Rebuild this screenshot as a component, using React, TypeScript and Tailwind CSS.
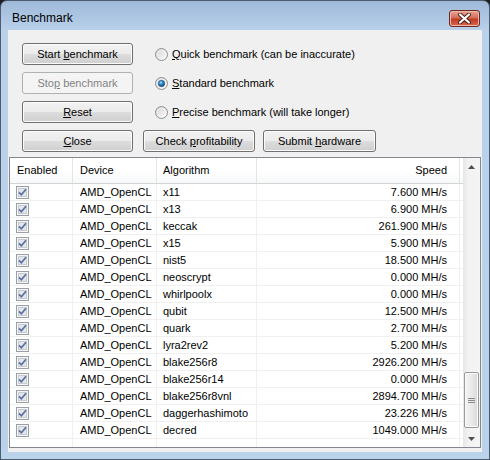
import React from "react";

type Row = { algo: string; speed: string };

const rows: Row[] = [
  { algo: "x11", speed: "7.600 MH/s" },
  { algo: "x13", speed: "6.900 MH/s" },
  { algo: "keccak", speed: "261.900 MH/s" },
  { algo: "x15", speed: "5.900 MH/s" },
  { algo: "nist5", speed: "18.500 MH/s" },
  { algo: "neoscrypt", speed: "0.000 MH/s" },
  { algo: "whirlpoolx", speed: "0.000 MH/s" },
  { algo: "qubit", speed: "12.500 MH/s" },
  { algo: "quark", speed: "2.700 MH/s" },
  { algo: "lyra2rev2", speed: "5.200 MH/s" },
  { algo: "blake256r8", speed: "2926.200 MH/s" },
  { algo: "blake256r14", speed: "0.000 MH/s" },
  { algo: "blake256r8vnl", speed: "2894.700 MH/s" },
  { algo: "daggerhashimoto", speed: "23.226 MH/s" },
  { algo: "decred", speed: "1049.000 MH/s" },
];

// win7 style push button
const Btn = ({ children, className, disabled }: { children: React.ReactNode; className: string; disabled?: boolean }) => (
  <div
    className={
      "h-[22px] flex items-center justify-center rounded-[3px] border " +
      (disabled
        ? "border-[#adb2b5] bg-[#f4f4f4] text-[#838383] "
        : "border-[#707070] bg-[linear-gradient(#f2f2f2,#ebebeb_50%,#dddddd_50%,#cfcfcf)] shadow-[inset_0_0_0_1px_#fbfbfb] text-black ") +
      className
    }
  >
    <span className="leading-none">{children}</span>
  </div>
);

const Radio = ({ checked, id }: { checked?: boolean; id: string }) => (
  <svg width="13" height="13" viewBox="0 0 13 13" className="shrink-0">
    <defs>
      <linearGradient id={"rg" + id} x1="0" y1="0" x2="1" y2="1">
        <stop offset="0" stopColor="#d4d4d4" />
        <stop offset="1" stopColor="#fbfbfb" />
      </linearGradient>
      <radialGradient id={"rd" + id} cx="0.4" cy="0.35" r="0.7">
        <stop offset="0" stopColor="#a8dcfb" />
        <stop offset="0.45" stopColor="#2b86c9" />
        <stop offset="1" stopColor="#0e3f6e" />
      </radialGradient>
    </defs>
    <circle cx="6.5" cy="6.5" r="6" fill={"url(#rg" + id + ")"} stroke="#8f9090" />
    <circle cx="6.5" cy="6.5" r="4.2" fill="none" stroke="#ffffff" strokeOpacity="0.5" />
    {checked && <circle cx="6.5" cy="6.5" r="3.2" fill={"url(#rd" + id + ")"} stroke="#1b4f7f" strokeWidth="0.6" />}
  </svg>
);

const Check = () => (
  <svg width="13" height="13" viewBox="0 0 13 13">
    <rect x="0.5" y="0.5" width="12" height="12" fill="#f5f6f7" stroke="#9a9fa5" />
    <rect x="2.5" y="2.5" width="8" height="8" fill="#e3e6ea" stroke="#c6cbd0" />
    <path d="M3 6.3 L5.4 8.8 L10 3.2" fill="none" stroke="#5a6ea3" strokeWidth="1.7" />
  </svg>
);

const App = () => {
  return (
    <div className="w-[490px] h-[460px] bg-[#1e1e1e] font-['Liberation_Sans',Arial,sans-serif] text-[11px] text-black">
      <div className="w-[490px] h-[460px] rounded-t-[7px] border border-[#4d5c6e] bg-[linear-gradient(#9eb9d8,#bad1eb_30px,#bbd2eb)] flex flex-col">
        {/* title bar */}
        <div className="h-[29px] flex items-start justify-between">
          <div className="pl-[11px] pt-[10px] text-[12px] leading-[14px] text-black">Benchmark</div>
          <div className="mt-[9px] mr-[9px] w-[31px] h-[17px] rounded-[3px] border border-[#6b2a21] bg-[linear-gradient(#eaa595,#d46e59_45%,#c13a24_55%,#d8684c)] shadow-[inset_0_0_0_1px_#f0b8aa] flex items-center justify-center">
            <svg width="13" height="11" viewBox="0 0 13 11">
              <path d="M2 1.5 L11 9.5 M11 1.5 L2 9.5" stroke="#4a1d16" strokeWidth="4" strokeLinecap="round" />
              <path d="M2 1.5 L11 9.5 M11 1.5 L2 9.5" stroke="#ffffff" strokeWidth="2.2" strokeLinecap="round" />
            </svg>
          </div>
        </div>

        {/* client area */}
        <div className="mx-[7px] h-[422px] bg-[#f0f0f0] flex flex-col">
          <div className="pl-[14px] pt-[13px] flex flex-col gap-[7px]">
            <div className="flex items-center">
              <Btn className="w-[111px]">Start <span className="underline">b</span>enchmark</Btn>
              <div className="ml-[22px] flex items-center gap-[4px]">
                <Radio id="a" />
                <span><span className="underline">Q</span>uick benchmark (can be inaccurate)</span>
              </div>
            </div>
            <div className="flex items-center">
              <Btn className="w-[111px]" disabled>Sto<span className="underline">p</span> benchmark</Btn>
              <div className="ml-[22px] flex items-center gap-[4px]">
                <Radio id="b" checked />
                <span><span className="underline">S</span>tandard benchmark</span>
              </div>
            </div>
            <div className="flex items-center">
              <Btn className="w-[111px]"><span className="underline">R</span>eset</Btn>
              <div className="ml-[22px] flex items-center gap-[4px]">
                <Radio id="c" />
                <span><span className="underline">P</span>recise benchmark (will take longer)</span>
              </div>
            </div>
            <div className="flex items-center">
              <Btn className="w-[111px]"><span className="underline">C</span>lose</Btn>
              <Btn className="w-[112px] ml-[10px]">Check <span className="underline">p</span>rofitability</Btn>
              <Btn className="w-[113px] ml-[8px]">Submit <span className="underline">h</span>ardware</Btn>
            </div>
          </div>

          {/* list view */}
          <div className="mt-[5px] ml-[1px] w-[472px] h-[291px] border border-[#828790] bg-white flex">
            <div className="w-[453px] flex flex-col">
              <div className="h-[26px] shrink-0 flex border-b border-[#d5d5d5] bg-[linear-gradient(#ffffff,#ffffff_50%,#f7f8f9)]">
                <div className="w-[63px] border-r border-[#e5e5e5] pl-[7px] flex items-center">Enabled</div>
                <div className="w-[84px] border-r border-[#e5e5e5] pl-[7px] flex items-center">Device</div>
                <div className="w-[100px] border-r border-[#e5e5e5] pl-[6px] flex items-center">Algorithm</div>
                <div className="w-[203px] border-r border-[#e5e5e5] pr-[12px] flex items-center justify-end">Speed</div>
              </div>
              {rows.map((r) => (
                <div key={r.algo} className="h-[17px] shrink-0 flex border-b border-[#f0f0f0]">
                  <div className="w-[63px] border-r border-[#f0f0f0] pl-[6px] flex items-center">
                    <Check />
                  </div>
                  <div className="w-[84px] border-r border-[#f0f0f0] pl-[7px] flex items-center">AMD_OpenCL</div>
                  <div className="w-[100px] border-r border-[#f0f0f0] pl-[6px] flex items-center">{r.algo}</div>
                  <div className="w-[203px] border-r border-[#f0f0f0] pr-[12px] flex items-center justify-end">{r.speed}</div>
                </div>
              ))}
              <div className="flex-1 flex">
                <div className="w-[63px] border-r border-[#f0f0f0]" />
                <div className="w-[84px] border-r border-[#f0f0f0]" />
                <div className="w-[100px] border-r border-[#f0f0f0]" />
                <div className="w-[203px] border-r border-[#f0f0f0]" />
              </div>
            </div>

            {/* scrollbar */}
            <div className="w-[17px] flex flex-col bg-[linear-gradient(90deg,#e6e6e6,#f2f2f2_30%,#f4f4f4)]">
              <div className="h-[17px] flex items-center justify-center">
                <svg width="7" height="4" viewBox="0 0 7 4"><path d="M0 4 L3.5 0 L7 4 Z" fill="#505050" /></svg>
              </div>
              <div className="flex-1 flex flex-col justify-end pb-[2px] px-[1px]">
                <div className="h-[56px] rounded-[2px] border border-[#9a9a9a] bg-[linear-gradient(90deg,#f4f4f4,#e9e9e9_50%,#d9d9d9)] shadow-[inset_0_0_0_1px_#fbfbfb] flex flex-col items-center justify-center gap-[1px]">
                  <div className="w-[7px] h-[1px] bg-[#8a8a8a]" />
                  <div className="w-[7px] h-[1px] bg-[#8a8a8a]" />
                  <div className="w-[7px] h-[1px] bg-[#8a8a8a]" />
                </div>
              </div>
              <div className="h-[17px] flex items-center justify-center">
                <svg width="7" height="4" viewBox="0 0 7 4"><path d="M0 0 L3.5 4 L7 0 Z" fill="#505050" /></svg>
              </div>
            </div>
          </div>
        </div>
      </div>
    </div>
  );
};

export default App;
